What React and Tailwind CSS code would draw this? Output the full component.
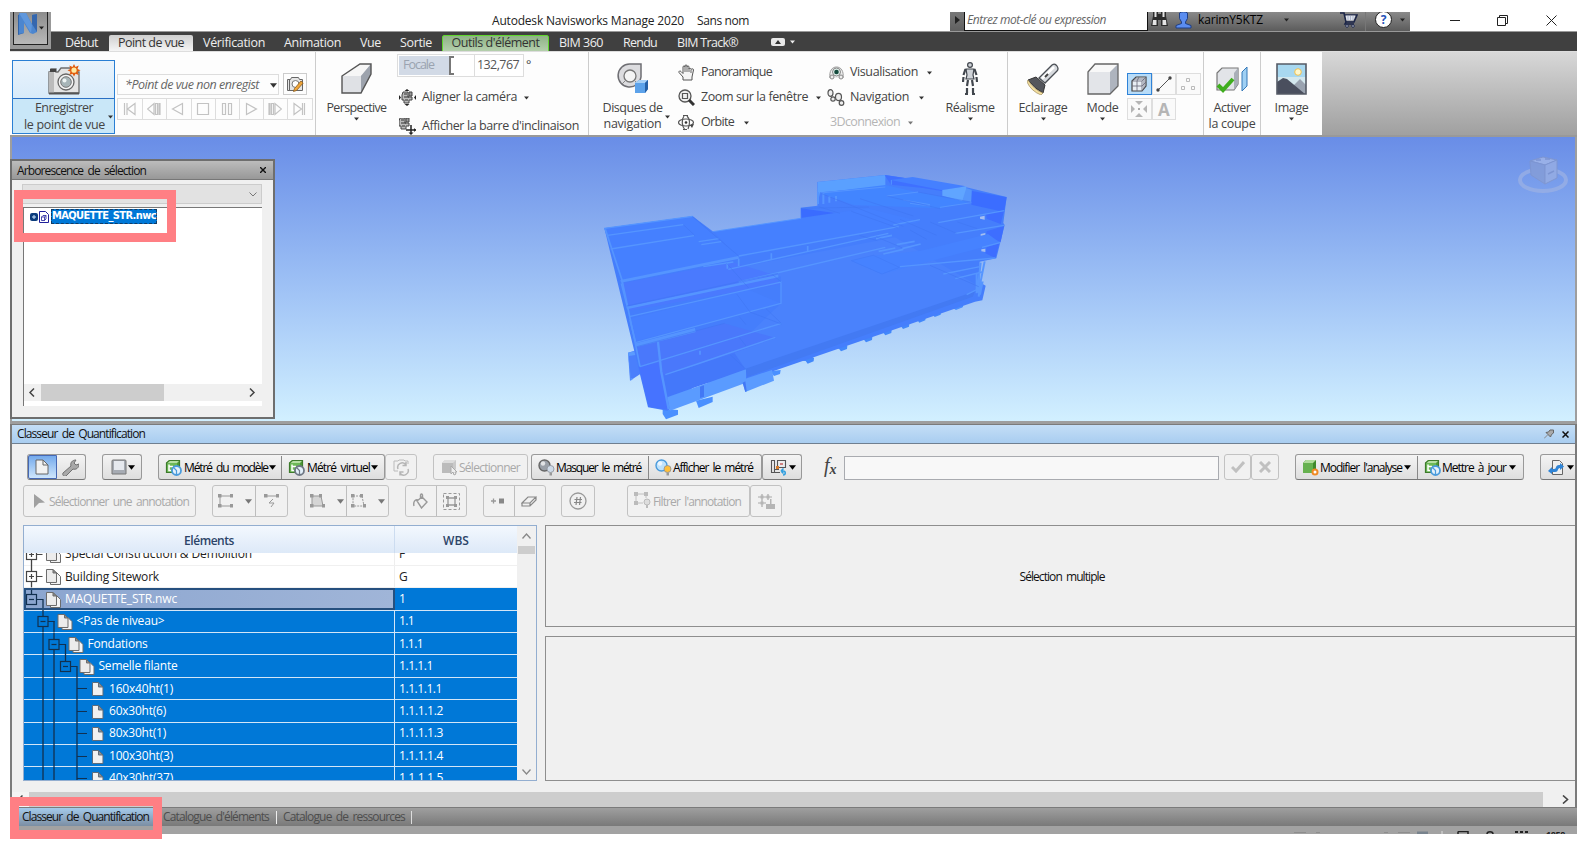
import React, { useLayoutEffect, useRef, useState } from "react";

/* Single-line label whose tracking is adjusted so that it spans `w` pixels. */
function T({ w, className = "", children }) {
  const ref = useRef(null);
  const [ls, setLs] = useState(0);
  useLayoutEffect(() => {
    const el = ref.current;
    const natural = el.getBoundingClientRect().width;
    setLs((w - natural) / el.textContent.length);
  }, [w]);
  return (
    <span ref={ref} className={`inline-block shrink-0 whitespace-pre ${className}`} style={{ letterSpacing: ls + "px" }}>
      {children}
    </span>
  );
}

function Caret({ className = "", size = 5, color = "#333" }) {
  return (
    <svg className={`shrink-0 ${className}`} width={size} height={Math.ceil(size / 2) + 1} viewBox="0 0 8 5">
      <path d="M0 0h8L4 5z" fill={color} />
    </svg>
  );
}

function Svg({ w, h, vb, className = "", children }) {
  return (
    <svg className={`shrink-0 ${className}`} width={w} height={h} viewBox={vb || `0 0 ${w} ${h}`} fill="none">
      {children}
    </svg>
  );
}

/* ---------- Title bar ---------- */

function AppButton() {
  return (
    <div className="h-[37px] w-[41px] shrink-0 bg-[#999] px-[3px] pb-[4px]">
      <div className="flex h-full w-full items-start border border-t-0 border-[#222] bg-linear-to-b from-[#8c8c8c] to-[#b9b9b9] pl-[4px]">
        <Svg w={20} h={24}>
          <path d="M0 3 6 1v20l-6 2z" fill="#2f62a8" />
          <path d="M1 1h7l6 11V3l5-1v18l-4 2-3-1-6-10v10l-5 1z" fill="#4c86cf" />
          <path d="M14 3l5-1v18l-5-8z" fill="#3567ae" />
          <path d="M1 1h7l6 12-1 8-6-10z" fill="#5f97dc" />
        </Svg>
        <Caret className="mt-[14px] ml-[1px]" size={5} color="#222" />
      </div>
    </div>
  );
}

function TitleRow() {
  return (
    <div className="flex h-[20px] items-center overflow-hidden border-b border-[#999] bg-white text-[12px] text-[#222]">
      <div className="flex w-[899px] shrink-0 pl-[441px] pb-[2px]">
        <T w={192}>Autodesk Navisworks Manage 2020</T>
        <T w={52} className="ml-[13px]">Sans nom</T>
      </div>
      <div className="flex h-full w-[460px] shrink-0 items-center bg-linear-to-b from-[#8a8a8a] to-[#5c5c5c]">
        <div className="flex h-full w-[14px] shrink-0 items-center justify-center bg-linear-to-b from-[#777] to-[#606060]">
          <Svg w={5} h={8} className="mb-[4px]"><path d="M0 0v8l5-4z" fill="#222" /></Svg>
        </div>
        <div className="flex h-full w-[184px] shrink-0 items-center border border-t-0 border-[#111] bg-white pl-[2px] pb-[3px] italic text-[#666]">
          <T w={139}>Entrez mot-clé ou expression</T>
        </div>
        <Svg w={17} h={17} className="ml-[3px] mb-[4px]">
          <path d="M2 0h5v3h3V0h5v5l2 10h-7V9H7v6H0L2 5z" fill="#2c2c2c" />
          <path d="M3.500 1h2v5h-2zM11.500 1h2v5h-2zM2 9h3.500v5h-4zM11.500 9H15l.5 5h-4z" fill="#e4e4e4" />
        </Svg>
        <Svg w={17} h={17} className="ml-[7px] mb-[3px]">
          <path d="M4.500 1C6-.5 11-.5 12.500 1v5.500L10.500 10v1.500l5.500 2V16H1v-2.500l5.500-2V10l-2-3.500z" fill="#5b8df0" stroke="#1f3f86" />
        </Svg>
        <T w={65} className="ml-[6px] mb-[3px] text-black">karimY5KTZ</T>
        <Caret className="ml-[21px] mb-[3px]" color="#222" />
        <Svg w={18} h={16} className="ml-[51px] mb-[4px]">
          <path d="M0 1h4l2 9h8l3-7H5M6 10l-1 2h9" stroke="#1b2548" strokeWidth="1.600" />
          <path d="M5.500 3.500h10l-2 5h-7z" fill="#dfe3ee" /><path d="M8 4v4M10.500 4v4M13 4v4" stroke="#9aa3bd" strokeWidth=".7" /><circle cx="7" cy="14" r="1.300" fill="#dfe3ee" stroke="#1b2548" /><circle cx="13" cy="14" r="1.300" fill="#dfe3ee" stroke="#1b2548" />
        </Svg>
        <div className="ml-[7px] h-full w-px bg-[#777]" />
        <div className="ml-[9px] mb-[4px] flex h-[17px] w-[17px] shrink-0 items-center justify-center rounded-full border border-[#222] bg-white text-[12px] leading-[12px] font-bold text-[#2451b8]">?</div>
        <Caret className="ml-[8px] mb-[3px]" color="#222" />
      </div>
      <Svg w={10} h={12} className="ml-[40px] mb-[4px]"><path d="M0 6.500h10" stroke="#222" /></Svg>
      <Svg w={11} h={12} className="ml-[37px] mb-[3px]"><path d="M.5 3.500h8v8h-8zM2.500 3.500v-2h8v8h-2" stroke="#222" /></Svg>
      <Svg w={11} h={11} className="ml-[38px] mb-[3px]"><path d="M.5.5l10 10M10.500.5l-10 10" stroke="#222" /></Svg>
    </div>
  );
}

function TabRow() {
  return (
    <div className="flex h-[19px] items-center bg-[#404040] pt-[3px] text-[12.500px] leading-[16px] text-[#eee]">
      <T w={33} className="ml-[14px]">Début</T>
      <div className="ml-[11px] flex h-[17px] w-[84px] shrink-0 items-center justify-center rounded-t-[2px] bg-linear-to-b from-[#cfcfcf] to-[#f7f7f7] text-[#333]">
        <T w={66}>Point de vue</T>
      </div>
      <T w={62} className="ml-[10px]">Vérification</T>
      <T w={57} className="ml-[19px]">Animation</T>
      <T w={21} className="ml-[19px]">Vue</T>
      <T w={32} className="ml-[19px]">Sortie</T>
      <div className="ml-[10px] flex h-[17px] w-[107px] shrink-0 items-center justify-center rounded-t-[2px] border border-[#5fd62d] bg-linear-to-b from-[#8fb386] to-[#b4cfac] text-[#333]">
        <T w={88}>Outils d'élément</T>
      </div>
      <T w={44} className="ml-[10px]">BIM 360</T>
      <T w={34} className="ml-[20px]">Rendu</T>
      <T w={61} className="ml-[20px]">BIM Track®</T>
      <Svg w={14} h={8} className="ml-[33px] mb-[2px]"><rect width="14" height="8" rx="2" fill="#e8e8e8" /><path d="M4 6l3-4 3 4z" fill="#333" /></Svg>
      <Caret className="ml-[5px] mb-[2px]" color="#eee" />
    </div>
  );
}

/* ---------- Ribbon ---------- */

const CameraIcon = () => (
  <Svg w={34} h={32}>
    <path d="M1 8h2V5h5v3h2l3-4h9l3 4h6v21H1z" fill="#e4e4e4" stroke="#6d6d6d" strokeWidth="1.300" />
    <path d="M1 8h5v21H1z" fill="#bbb" /><path d="M2 5h6v3H2z" fill="#444" />
    <path d="M1 29.500h30" stroke="#555" strokeWidth="2" />
    <circle cx="18" cy="18" r="8" fill="#f5f5f5" stroke="#666" strokeWidth="1.300" />
    <circle cx="18" cy="18" r="5.300" fill="#a7b5b8" stroke="#777" /><circle cx="16.500" cy="16.500" r="2" fill="#eef4f4" />
    <path d="M26 0l1.500 3 3.200-1.500L29.500 5l3 1.200-3 1.500 1.200 3.300-3.200-1.200L26 12.500l-1.500-2.700-3.200 1.200 1.200-3.300-3-1.500 3-1.200-1.200-3.500L24.500 3z" fill="#e25b0c" />
    <circle cx="26" cy="6.200" r="2.600" fill="#ffe9a0" />
  </Svg>
);

const PLAY = [
  "M1.500 1v12M12 1.500v11L4.500 7zM4 1v12",
  "M7 1.500v11L.5 7zM8.500 1.500h2v11h-2zM12 1.500h1v11h-1z",
  "M11.500 1.500v11L1.500 7z",
  "M1.500 1.500h11v11h-11z",
  "M2.500 1.500h3v11h-3zM8.500 1.500h3v11h-3z",
  "M2.500 1.500v11L12.500 7z",
  "M7 1.500v11L13.500 7zM1 1.500h1v11H1zM3.500 1.500h2v11h-2z",
  "M2 1.500v11L9.500 7zM12.500 1v12M10.500 1v12",
];

function BigButton({ icon, label, w, box, label2, w2, caret = true, side }) {
  return (
    <div className={`flex shrink-0 flex-col items-center pt-[10px] ${box}`}>
      <div className="flex h-[33px] items-center justify-center">{icon}</div>
      <T w={w} className="mt-[4px] leading-[17px]">{label}</T>
      {label2 ? (
        <div className="flex items-center leading-[16px]">
          <T w={w2}>{label2}</T>
          {side && <Caret className="-mt-[15px] ml-[3px] -mr-[8px]" />}
        </div>
      ) : (
        caret && <Caret className="mt-[1px]" />
      )}
    </div>
  );
}

function Item({ icon, label, w, caret = true, cls = "", gap = "ml-[9px]" }) {
  return (
    <div className={`flex h-[25px] shrink-0 items-center ${cls}`}>
      <div className="flex w-[23px] shrink-0 items-center">{icon}</div>
      <T w={w}>{label}</T>
      {caret && <Caret className={gap} />}
    </div>
  );
}

function SmallBtn({ children, active, w = "w-[24.500px]" }) {
  return (
    <div className={`flex h-[22px] items-center justify-center border ${w} ${active ? "border-[#2f83d8] bg-[#b8dcf8]" : "border-[#dedede] bg-[#fafafa]"}`}>
      {children}
    </div>
  );
}

const Camera2 = () => (
  <g>
    <path d="M4 3h5v5h4v3h-3v3H5v-3H3V6z" fill="#bbb" stroke="#444" /><path d="M5 5h3M5 8h5M6 11h3" stroke="#333" />
    <path d="M10 3h3v4h-3z" fill="#999" stroke="#444" />
  </g>
);

function Ribbon() {
  return (
    <div className="flex h-[86px] shrink-0 border-t border-[#ddd] border-b-2 border-b-[#999] bg-linear-to-b from-[#d8d8d8] to-[#a0a0a0] text-[12.500px] text-[#444]">
      <div className="flex w-[306px] shrink-0 border-r border-[#ccc] bg-[#fdfdfd] pl-[2px]">
        <div className="mt-[8px] flex h-[74px] w-[103px] shrink-0 flex-col border border-[#2a7fd4] bg-[#c9e7f8]">
          <div className="flex h-[38px] items-center justify-center border-b border-[#2a6fc4] bg-linear-to-b from-[#e9f3fc] to-[#d8ebfa] pl-[2px]"><CameraIcon /></div>
          <div className="flex flex-1 flex-col items-center pt-[1px] leading-[16.500px]">
            <T w={58} className="ml-[1px]">Enregistrer</T>
            <div className="flex items-center"><T w={81} className="ml-[2px]">le point de vue</T><Caret className="-mt-[15px] ml-[3px] -mr-[8px]" /></div>
          </div>
        </div>
        <div className="ml-[2px] mt-[21px] flex flex-col">
          <div className="flex">
            <div className="mt-[1px] flex h-[21px] w-[162px] items-center justify-between border border-[#ddd] pt-[1px] pl-[7px] pr-[1px] italic text-[#666]">
              <T w={134}>*Point de vue non enregist</T><Caret size={7} />
            </div>
            <div className="ml-[4px] flex h-[22px] w-[24px] items-center justify-center border border-[#ccc]">
              <Svg w={18} h={17}>
                <path d="M1.500 3.500h3l1-2h7l1 2h3v11h-15z" fill="#e5e5e5" stroke="#666" /><path d="M3.500 4v10" stroke="#666" /><circle cx="9.500" cy="8" r="3.500" fill="#fff" stroke="#777" />
                <path d="M7.500 15.500l1-3L15 5l2.200 2-6.700 7.500z" fill="#f0a63a" stroke="#8a5a1c" strokeWidth=".8" />
              </Svg>
            </div>
          </div>
          <div className="mt-[3px] flex border border-[#ddd]">
            {PLAY.map((d, i) => (
              <div key={i} className={`flex h-[20px] w-[24.200px] items-center justify-center pr-[1px] ${i ? "border-l border-[#ddd]" : ""}`}>
                <Svg w={14} h={14}><path d={d} stroke="#c3c3c3" strokeWidth="1.200" /></Svg>
              </div>
            ))}
          </div>
        </div>
      </div>

      <div className="flex w-[273px] shrink-0 border-r border-[#ccc] bg-[#fdfdfd]">
        <BigButton box="w-[81px]" w={60} label="Perspective" icon={
          <Svg w={31} h={32}>
            <path d="M1 13l18-12h11v8L20 30H1z" fill="#c9ccd2" /><path d="M1 13L19 1h11L20 13z" fill="#f6f6f6" /><path d="M20 13L30 1v10L20 30z" fill="#9da3ad" />
            <path d="M1 13h19v17H1z" fill="#dfe1e5" /><path d="M1 13L19 1h11v10L20 30H1z" stroke="#555" strokeWidth="1.400" />
          </Svg>} />
        <div className="flex h-[83px] flex-col pt-[2px]">
          <div className="flex h-[23px] shrink-0 items-center">
            <div className="flex h-[23px] w-[127px] items-center border border-[#ddd] bg-white">
              <div className="ml-[1px] flex h-[19px] w-[50px] shrink-0 items-center bg-[#d2dae6] pl-[4px] text-[#9aa3b0]"><T w={31}>Focale</T></div>
              <div className="h-[19px] w-[5px] shrink-0 border-2 border-r-0 border-[#777]" />
              <div className="ml-[20px] flex h-full items-center border-l border-[#ddd] pl-[2px] text-[#555]"><T w={42}>132,767</T></div>
            </div>
            <span className="ml-[2px]">°</span>
          </div>
          <Item cls="ml-[2px] mt-[8px]" w={95} gap="ml-[7px]" label="Aligner la caméra" icon={<Svg w={17} h={17}><Camera2 /><path d="M8 0l2.500 2h-5zM8 17l2.500-2h-5zM0 6v5l2-2.500zM17 6v5l-2-2.500z" fill="#222" /></Svg>} />
          <Item cls="ml-[2px] mt-[4px]" w={157} caret={false} label="Afficher la barre d'inclinaison" icon={<Svg w={17} h={17}><g transform="translate(-3 -3)"><Camera2 /></g><path d="M12 7v9M7 12h10" stroke="#222" strokeWidth="1.500" /><path d="M12 17l2.500-2.500h-5zM17 12l-2-2v4z" fill="#222" /></Svg>} />
        </div>
      </div>

      <div className="flex w-[419px] shrink-0 border-r border-[#ccc] bg-[#fdfdfd]">
        <BigButton box="w-[87px]" w={60} label="Disques de" w2={58} label2="navigation" side icon={
          <Svg w={32} h={32}>
            <path d="M13 1h11v13a11.500 11.500 0 1 1-11-13z" fill="#dcdcdf" stroke="#6e6e73" strokeWidth="1.500" />
            <circle cx="13" cy="13" r="6" fill="#f4f4f4" stroke="#777" strokeWidth="1.300" /><path d="M5 21l4-4M17 17l3 3" stroke="#888" />
            <path d="M18 20l4-3h9v9l-3 4H18z" fill="#3c83d3" /><path d="M18 20l4-3h9l-3 3z" fill="#a6d0f7" /><path d="M18 20h10v10H18z" fill="#5ca2ea" /><path d="M28 20l3-3v9l-3 4z" fill="#2561a8" />
          </Svg>} />
        <div className="flex w-[151px] shrink-0 flex-col pt-[8px] pl-[2px]">
          <Item w={71} caret={false} label="Panoramique" icon={<Svg w={17} h={17}><path d="M5 16v-3L1 8.500c-.5-1.500 1-2 2-1l2 2V3c0-1.500 2-1.500 2 0V2c0-1.500 2-1.500 2 0v1c0-1.500 2-1.500 2 0v2c.5-1 2-1 2 .5 1-1 2.500-1 2.500.5L14 13v3z" fill="#f4f4f4" stroke="#555" /><path d="M7 3v5M9 3v5M11 4v4M13 6v3" stroke="#666" /></Svg>} />
          <Item w={107} gap="ml-[8px]" label="Zoom sur la fenêtre" icon={<Svg w={17} h={17}><circle cx="7" cy="7" r="6" fill="#eee" stroke="#555" strokeWidth="1.300" /><path d="M4.500 4.500h5v5h-5z" stroke="#555" strokeWidth="1.200" /><path d="M11 11l5 5" stroke="#333" strokeWidth="3" /></Svg>} />
          <Item w={33} gap="ml-[10px]" label="Orbite" icon={<Svg w={17} h={17}><ellipse cx="8" cy="8.500" rx="7.500" ry="3.500" stroke="#555" strokeWidth="1.200" /><path d="M5 1.500h5M5 15.500h4M6 2c-3 4-2 10 1 14M9 2c3 3 3 8 1 13" stroke="#555" strokeWidth="1.200" /><circle cx="8" cy="8.500" r="1.300" fill="#333" /><path d="M12 11l4-1-2 4z" fill="#444" /></Svg>} />
        </div>
        <div className="flex w-[107px] shrink-0 flex-col pt-[8px]">
          <Item w={68} gap="ml-[9px]" label="Visualisation" icon={<Svg w={17} h={14} className="ml-[1px]"><path d="M2 12C1 5 4 1 8.500 1S16 5 15 12" fill="#eee" stroke="#999" /><circle cx="8.500" cy="6" r="4" fill="#dfeee9" stroke="#888" /><circle cx="8.500" cy="6" r="2.300" fill="#134a3c" /><circle cx="4" cy="11" r="2" fill="#eee" stroke="#888" /><circle cx="13" cy="11" r="2" fill="#eee" stroke="#888" /></Svg>} />
          <Item w={59} gap="ml-[10px]" label="Navigation" icon={<Svg w={18} h={17}><g stroke="#555" strokeWidth="1.200" fill="#eee"><ellipse cx="3.500" cy="4" rx="2.500" ry="3.400" /><circle cx="6" cy="10" r="2.200" /><ellipse cx="11.500" cy="8" rx="3" ry="3.600" /><circle cx="14.500" cy="14" r="2.300" /></g></Svg>} />
          <div className="ml-[3px] flex h-[25px] items-center text-[#b5b5b5]"><T w={70}>3Dconnexion</T><Caret className="ml-[8px]" color="#777" /></div>
        </div>
        <BigButton box="w-[72px]" w={49} label="Réalisme" icon={
          <Svg w={16} h={33}>
            <g fill="#cfd3d8" stroke="#41464d" strokeWidth="1.200"><circle cx="8" cy="3" r="2.400" /><path d="M4 7h8l-1 6 1 4H4l1-4z" /><path d="M3.500 7L1.500 13M12.500 7l2 6M1.500 15l-.5 5M14.500 15l.5 5M6 18l-1 6M10 18l1 6M5 26v5M11 26v5M3 32h3M10 32h3" strokeWidth="2.200" /></g>
          </Svg>} />
      </div>

      <div className="flex w-[196px] shrink-0 border-r border-[#ccc] bg-[#fdfdfd]">
        <BigButton box="w-[70px]" w={49} label="Eclairage" icon={
          <Svg w={32} h={32}>
            <path d="M12 15L25 2q3-2 5 1t0 5L18 20z" fill="#d7dade" stroke="#4b4f55" strokeWidth="1.300" /><path d="M15 15.500L27 4" stroke="#fff" strokeWidth="2.500" /><path d="M18 14l3-3" stroke="#444" strokeWidth="2" />
            <path d="M9 14l9 8-2 8Q8 26 1 17z" fill="#54565c" stroke="#333" /><path d="M1 17q6 10 15 13l-2 2Q4 28 0 19z" fill="#f3dfa0" stroke="#8f7b4a" strokeWidth=".6" />
          </Svg>} />
        <BigButton box="w-[49px]" w={32} label="Mode" icon={
          <Svg w={32} h={32}>
            <path d="M1 9l7-8h23v22l-8 8H1z" fill="#aeb4be" /><path d="M1 9l7-8h23l-8 8z" fill="#f8f8f8" /><path d="M1 9h22v22H1z" fill="#e3e5e9" /><path d="M1 9l7-8h23v22l-8 8H1z" stroke="#666" strokeWidth="1.300" />
          </Svg>} />
        <div className="mt-[21px] flex flex-col gap-[3px]">
          <div className="flex">
            <SmallBtn active><Svg w={16} h={16}><path d="M1 5l4-4h10v9l-4 5H1z" fill="#e8eef4" stroke="#444" strokeWidth="1.200" /><path d="M1 5h10v10M11 5l4-4M6 5v10M1 10h10M13 3v10M3 3h10M8 1L6 5M11 10l4-4" stroke="#667" strokeWidth=".8" /></Svg></SmallBtn>
            <SmallBtn><Svg w={16} h={16}><path d="M2 14L14 2" stroke="#555" /><circle cx="2" cy="14" r="1.700" fill="#444" /><circle cx="14" cy="2" r="1.700" fill="#444" /></Svg></SmallBtn>
            <SmallBtn><Svg w={16} h={16}><path d="M6.500 2.500h3v3h-3zM1.500 10.500h3v3h-3zM11.500 10.500h3v3h-3z" stroke="#bbb" /></Svg></SmallBtn>
          </div>
          <div className="flex">
            <SmallBtn><Svg w={16} h={16}><path d="M4 0h8L8 4zM4 16h8l-4-4zM0 4v8l4-4zM16 4v8l-4-4z" fill="#b5b5b5" /><path d="M7 7h2v2H7z" fill="#aaa" /></Svg></SmallBtn>
            <SmallBtn><span className="text-[17px] leading-none font-bold text-[#b5b5b5]">A</span></SmallBtn>
          </div>
        </div>
      </div>

      <div className="flex w-[57px] shrink-0 border-r border-[#ccc] bg-[#fdfdfd]">
        <BigButton box="w-[56px]" w={37} label="Activer" w2={47} label2="la coupe" icon={
          <Svg w={32} h={28} className="mt-[2px]">
            <path d="M1 7l5-5h16v16l-4 6H1z" fill="#e2e4e8" stroke="#777" strokeWidth="1.200" /><path d="M18 7l4-5v16l-4 6z" fill="#a9afb8" />
            <path d="M26 6l5-5v19l-5 5z" fill="#9fd0f4" stroke="#3579b8" /><path d="M2 19l5 5L17 13" stroke="#3fae1e" strokeWidth="4" />
          </Svg>} />
      </div>
      <div className="flex w-[61px] shrink-0 bg-[#fdfdfd]">
        <BigButton box="w-[61px]" w={34} label="Image" icon={
          <Svg w={31} h={32}>
            <path d="M1 1h29v30H1z" fill="#a8d8f0" /><path d="M1 14h29v17H1z" fill="#d4e8ee" /><path d="M18 22l6-6 6 6v9H18z" fill="#9aa3b0" /><path d="M1 19l6-4 4 1 18 15H1z" fill="#4a4f5e" /><circle cx="22" cy="9" r="3.300" fill="#fff7cc" stroke="#f2c14e" />
            <path d="M1 1h29v30H1z" stroke="#555b66" strokeWidth="1.600" />
          </Svg>} />
      </div>
    </div>
  );
}

/* ---------- 3D view ---------- */

const FEET = [[640, 600], [740, 563], [815, 536], [873, 515], [926, 496], [975, 477], [1021, 460], [1088, 436]];

function Building() {
  return (
    <svg className="absolute left-[578px] top-[23px]" width="430" height="270" viewBox="0 0 1290 810">
      {FEET.map(([x, y]) => (
        <path key={x} d={`M${x - 4} ${y + 2}l22-16 14 8-1 10-18 7-6-8z`} fill="#4288fb" />
      ))}
      <path d="M1078 438l40-10v14l-20 8zM218 746l46 4v14l-36 14-10-16zM318 722l50-12v16l-42 18zM540 634l32-4-2 12-18 6z" fill="#4a90ff" />
      <path d="M114 578l26-8 20 66-40 26z" fill="#4a7ffc" />
      <path d="M114 578l26-6 2 12-26 4 6 66 8 2-8 6z" fill="#5b9bff" />
      <path d="M43 205l265-36 62 46 262-38V143l50-6V66l204-21 240 36 124 30-10 78 4 6-25 100-50 10 0 62 18 10-10 44-22 4-700 241-85 31-12-20-10-30L232 752l-58-10z" fill="#457efc" />
      <path d="M43 205l265-36 138 120L96 360z" fill="#4580ff" />
      <path d="M372 215l460-70 160 40-550 108z" fill="#4580ff" />
      <path d="M445 322l470-90 250 146-12 24-690 228-36-60 146-140V350z" fill="#4a82fc" />
      <path d="M466 626l690-232-8 16-676 241z" fill="#437af3" />
      <path d="M683 66l203-21v36l-196 16-8 40z" fill="#5aa0ff" />
      <path d="M690 99l196-24 90 20 164 30-90 20-260-10z" fill="#4285ff" />
      <path d="M884 45l245 37-70 12-60-10-96-10z" fill="#3f70ff" />
      <path d="M902 60l66-9 160 28-70 12z" fill="#4580ff" />
      <path d="M1057 90l72-11v24l-12 20-60-16z" fill="#60a5ff" />
      <path d="M1146 93l104 19-8 44-98-22z" fill="#3b6dff" />
      <path d="M1129 84l16 6-2 36-26-4z" fill="#5595fb" />
      <path d="M633 145l100 14-98 14z" fill="#3a6cff" />
      <path d="M1188 160l54-8-10 40-42-16zM1190 214l52-16-10 48-44-18zM1190 262l38-12-12 44-30-14z" fill="#3e6eff" />
      <path d="M1170 170l14-3v12l-14-3zM1172 222l14-3v14l-14-4zM1174 268l12-2v10l-12-2z" fill="#a5bff0" />
      <path d="M784 302l68-15 142-15 200-50 36 26-354 94z" fill="#4682ff" />
      <path d="M784 302l92 40 52-20-78-36z" fill="#4682ff" stroke="#4179f5" strokeWidth="1.500" />
      <path d="M140 556l262-66 155 44-236 84-86 26 6 96-64-1z" fill="#4a78fb" />
      <path d="M222 646l212-66 34 50-236 80z" fill="#4478fa" />
      <path d="M146 620l58-12 34 142-62-10z" fill="#4673ff" />
      <path d="M232 712l236-84v40L240 752z" fill="#5a9bff" />
      <path d="M330 680l12-4v34l-12 4z" fill="#4278f5" />
      <path d="M458 668l8-12 80-26 6 32-86 34z" fill="#5a9bff" />
      <path d="M458 668l8-4 4 30-4 2z" fill="#4278f5" />
      <path d="M96 370l330-64 118 36 30 30-456 80z" fill="#4a7afe" />
      <path d="M118 478l354-90 100 42-436 114z" fill="#4680ff" />
      <g stroke="#5595ff" fill="none">
        <path d="M43 205l265-36" strokeWidth="4" />
        <path d="M46 208l50 152 40 190 14 70" strokeWidth="5" />
        <path d="M446 292l-354 72" strokeWidth="8" />
        <path d="M446 288l480-88" strokeWidth="4" />
        <path d="M52 226l228-32M62 267l250-40M326 245l60-9M334 254l60-9" strokeWidth="4" />
        <path d="M368 215l265-40M690 99l196-18M904 74V60" strokeWidth="3" />
        <path d="M415 328l480-108M340 320l90-14M446 366l440-104" strokeWidth="4" />
        <path d="M110 444l455-96" strokeWidth="7" />
        <path d="M118 470l455-104v64L136 548" strokeWidth="4" />
        <path d="M136 556l180-46" strokeWidth="12" />
        <path d="M150 620l424-130M226 644l96-32 234-80" strokeWidth="4" />
        <path d="M204 546l10 90 22 112" strokeWidth="7" />
        <path d="M94 370l20 78M120 480l16 64M446 296v22M544 280v20M653 258v18M412 310v16M330 572v12" strokeWidth="5" />
        <path d="M910 195l80-16M1045 188l198-36M1096 220l146-24M1176 262l54-14M930 320l286-26M1060 342l110-22M1096 356l80-20M1130 404l40-20" strokeWidth="4" />
        <path d="M866 274l50-10M880 282l60-14M920 254l54-10M936 266l56-14M858 236l48-10" strokeWidth="5" />
        <path d="M940 120l80 14M960 130l60 8M890 108l95-12M1050 142l94-14" strokeWidth="3" />
        <path d="M1184 304l-12 60-6 46M1172 308l-10 90M1160 340v60M1178 364l-8 40" strokeWidth="6" />
        <path d="M684 96v36M700 100v32M718 108v20M738 108v16" strokeWidth="6" />
      </g>
      <g stroke="#3f75f2" fill="none" strokeWidth="1.600">
        <path d="M308 170l138 118M280 194l34 32M410 310l66 74M440 402l40 54 94 36M448 470l20 24M448 532l20 26M528 446l46 44M548 344l26 22M420 584l48 44" />
        <path d="M690 99l250 100M686 140l64 20M784 154l140 50M810 116l160 52M890 108l160 38M984 96l158 30M1020 186l80 34M930 178l110 48M808 226l54 16M858 230l80 34M960 210l50 28M1102 186l60 20M1020 316l146 64" />
        <path d="M633 145l204-4M110 438l454-98M140 560l264-70" />
      </g>
    </svg>
  );
}

function ViewCube() {
  return (
    <svg className="absolute right-[6px] top-[17px] opacity-70" width="52" height="42" viewBox="0 0 52 42" fill="none">
      <ellipse cx="26" cy="26" rx="23" ry="11" stroke="#9db2e4" strokeWidth="4" />
      <path d="M13 7l13-4 14 3v18l-12 6-14-9z" fill="#94a9da" />
      <path d="M13 7l13-4 14 3-12 5z" fill="#a9bbe8" stroke="#8295c8" />
      <path d="M13 7l15 4v19l-14-9z" fill="#889ed4" stroke="#8295c8" />
      <path d="M28 11l12-5v18l-12 6z" fill="#9db1e2" stroke="#8295c8" />
      <path d="M31 20l6-3M19 6h5M28 5h5" stroke="#8094c9" strokeWidth="1.500" />
    </svg>
  );
}

function SelectionTree() {
  return (
    <div className="absolute -left-[2px] top-[22px] flex h-[260px] w-[265px] flex-col border-2 border-[#6e6e6e] bg-[#f0f0f0] text-[12px] [word-spacing:2px] text-[#111]">
      <div className="flex h-[19px] shrink-0 items-center justify-between border-b border-[#777] bg-linear-to-b from-[#bcbcbc] to-[#989898] pt-[1px] pl-[5px] pr-[7px]">
        <T w={129}>Arborescence de sélection</T>
        <Svg w={6} h={6} className="mb-[1px]"><path d="M0 0l6 6M6 0L0 6" stroke="#111" strokeWidth="1.400" /></Svg>
      </div>
      <div className="mt-[4px] ml-[10px] flex h-[20px] w-[240px] shrink-0 items-center justify-end border border-[#ccc] bg-[#e2e2e2] pr-[4px]">
        <Svg w={8} h={5}><path d="M.5.5L4 4 7.500.5" stroke="#777" /></Svg>
      </div>
      <div className="mt-[3px] ml-[11px] flex h-[199px] w-[239px] shrink-0 flex-col border-l border-t border-[#777] bg-white">
        <div className="flex h-[17px] items-center pl-[6px]">
          <Svg w={8} h={8}><rect width="8" height="8" rx="2" fill="#0b3c7c" /><path d="M4 2v4M2 4h4" stroke="#cfe8ff" /></Svg>
          <Svg w={10} h={12} className="ml-[1px]"><path d="M.5.500h6l3 3v8h-9z" fill="#fff" stroke="#20209a" /><path d="M2.500 6l1.500-1.500h3V8L5.500 9.500h-3zM2.500 6h3v3.500M5.500 6L7 4.500" stroke="#20209a" strokeWidth=".8" /></Svg>
          <div className="ml-[2px] flex h-[15px] items-center border border-dashed border-[#123c66] bg-[#0078d7] font-['DejaVu_Sans_Condensed','DejaVu_Sans',sans-serif] text-[11px] font-bold text-white">
            <T w={104}>MAQUETTE_STR.nwc</T>
          </div>
        </div>
        <div className="flex-1" />
        <div className="flex h-[17px] items-center bg-[#f0f0f0]">
          <Svg w={17} h={9}><path d="M10 .5L6 4.500l4 4" stroke="#444" strokeWidth="1.500" /></Svg>
          <div className="h-full w-[123px] bg-[#cdcdcd]" />
          <Svg w={9} h={9} className="ml-[83px]"><path d="M3 .5l4 4-4 4" stroke="#444" strokeWidth="1.500" /></Svg>
        </div>
        <div className="h-[5px] bg-white" />
      </div>
      <div className="absolute left-[2px] top-[29px] h-[52px] w-[162px] border-[9px] border-[#ff7f84]" />
    </div>
  );
}

/* ---------- Quantification panel ---------- */

const G = "shrink-0 flex items-center rounded-[3px] border";
const ON = "border-[#999] border-b-[#777] bg-linear-to-b from-[#f4f4f4] to-[#dedede] text-black";
const OFF = "border-[#c2c2c2] bg-[#f1f1f1] text-[#a9a9a9]";

const Cube = ({ badge = "#4a9bdc", gray }) => (
  <Svg w={17} h={17}>
    <path d="M1 4l3-3h11v9l-3 4H1z" fill={gray ? "#c9c9c9" : "#4d9a38"} /><path d="M1 4l3-3h11l-3 3z" fill={gray ? "#ddd" : "#b5dfa2"} /><path d="M1 4h11v10H1z" fill={gray ? "#bbb" : "#6cb956"} />
    {!gray && <path d="M1.500 4l3-2.500h10v8l-3 4h-10z" stroke="#3d7a2b" strokeWidth="1.200" />}
    {!gray && <path d="M4 5.500v6h2M4 7.500h4" stroke="#fff" strokeWidth="1.500" />}
    {!gray && <circle cx="11.500" cy="11.500" r="4.500" fill="#e4f1fb" stroke={badge} strokeWidth="1.800" />}
    {!gray && <path d="M8 8l3.500 3.500V15" stroke={badge} strokeWidth="1.200" />}
    {gray && <path d="M10 7v8l2-2 1 3 2-1-1-2h2z" fill="#eee" stroke="#aaa" />}
  </Svg>
);
const Bulb = ({ ball, edge, bulb }) => (
  <Svg w={17} h={17}>
    <circle cx="6.500" cy="6.500" r="5.500" fill={ball} stroke={edge} strokeWidth="1.400" /><circle cx="5" cy="4.500" r="2.200" fill="#fff" opacity=".7" />
    <circle cx="12.500" cy="10" r="3.500" fill={bulb} stroke="#8a8f98" strokeWidth=".8" /><path d="M11.500 13.500h2.500v3h-2.500z" fill="#999" />
  </Svg>
);

function Toolbar1() {
  return (
    <div className="flex h-[26px] shrink-0 overflow-hidden text-[12px] [word-spacing:2px]">
      <div className={`${G} ${ON} ml-[15px] h-[26px] w-[59px]`}>
        <div className="flex h-full w-[29px] items-center justify-center rounded-l-[2px] border border-[#4668b4] bg-linear-to-b from-[#74aaec] to-[#cfe6fb] pr-[2px]">
          <Svg w={14} h={16}><path d="M1 1h7l5 5v9H1z" fill="#f2f2f2" stroke="#666" /><path d="M8 1v5h5" stroke="#666" /></Svg>
        </div>
        <Svg w={17} h={17} className="ml-[5px]"><path d="M1 14L9 7c-1-3 1-6 5-6l-2 3 2 2 3-1c0 4-3 6-6 5l-7 7c-2 1-4-1-3-3z" fill="#a8a8a8" stroke="#707070" /></Svg>
      </div>
      <div className={`${G} ${ON} ml-[16px] h-[26px] w-[40px] pl-[8px]`}>
        <Svg w={16} h={17}><path d="M1 2q0-1 1-1h12q1 0 1 1v13H1z" fill="#a6abb3" stroke="#777" /><path d="M3 2h10v9H3z" fill="#e6e9ee" /></Svg>
        <Caret className="ml-[1px]" size={7} color="#000" />
      </div>
      <div className={`${G} ${ON} ml-[16px] h-[26px] w-[227px] pt-[1px]`}>
        <div className="flex h-full w-[123px] items-center border-r border-[#888] pl-[6px]"><Cube /><T w={84} className="ml-[2px]">Métré du modèle</T><Caret className="ml-[1px]" size={7} color="#000" /></div>
        <div className="flex h-full items-center pl-[6px]"><Cube badge="#6f7884" /><T w={63} className="ml-[2px]">Métré virtuel</T><Caret className="ml-[1px]" size={7} color="#000" /></div>
      </div>
      <div className={`${G} ${OFF} h-[26px] w-[32px] justify-center`}><Svg w={17} h={17}><path d="M5 12H1V2h4l1-1h5l1 1h3v3" stroke="#bbb" /><path d="M5 10a4.500 4.500 0 0 1 8-4M15 10a4.500 4.500 0 0 1-8 4M13 3v3.500h-3.500M7 16.500V13h3.500" stroke="#b5b5b5" strokeWidth="1.500" /></Svg></div>
      <div className={`${G} ${OFF} ml-[16px] h-[26px] w-[95px] pt-[1px] pl-[7px]`}><Cube gray /><T w={61} className="ml-[1px]">Sélectionner</T></div>
      <div className={`${G} ${ON} ml-[3px] h-[26px] w-[231px] pt-[1px]`}>
        <div className="flex h-full w-[117px] items-center border-r border-[#888] pl-[6px]"><Bulb ball="#9aa0a8" edge="#666" bulb="#cfdbe8" /><T w={85} className="ml-[1px]">Masquer le métré</T></div>
        <div className="flex h-full items-center pl-[6px]"><Bulb ball="#bfe2fb" edge="#4a9bdc" bulb="#ffbf3a" /><T w={80} className="ml-[1px]">Afficher le métré</T></div>
      </div>
      <div className={`${G} ${ON} h-[26px] w-[40px] pl-[7px]`}>
        <Svg w={17} h={17}><path d="M1.500 1.500h3v12h-3zM1 13.500h9M7.500 1.500h8v7h-8zM5 10.500h4" stroke="#555" strokeWidth="1.100" /><path d="M6 7h3v3H6z" fill="#d67a2a" /><path d="M10 4h3v2h-3z" fill="#d08080" /><path d="M11 12h2c3 0 3 4 0 4M11 12l2.500-2.500M11 12l2.500 2.500" stroke="#2f9fe0" strokeWidth="1.500" /></Svg>
        <Caret className="ml-[2px]" size={7} color="#000" />
      </div>
      <div className="ml-[22px] flex h-[26px] w-[20px] shrink-0 items-start font-['Liberation_Serif',serif] text-[20px] leading-[23px] text-[#444] italic">
        <span>f</span><span className="mt-[7px] text-[14px] leading-[18px] font-bold">x</span>
      </div>
      <div className="h-[24px] w-[375px] shrink-0 self-end border border-[#a9abb0] bg-[#f8f8f8]" />
      <div className={`${G} ${OFF} ml-[5px] h-[26px] w-[27px] justify-center`}><Svg w={14} h={12}><path d="M1 6l4 4 8-9" stroke="#c0c0c0" strokeWidth="3" /></Svg></div>
      <div className={`${G} ${OFF} h-[26px] w-[28px] justify-center`}><Svg w={12} h={12}><path d="M1 1l10 10M11 1L1 11" stroke="#c0c0c0" strokeWidth="3" /></Svg></div>
      <div className={`${G} ${ON} ml-[16px] h-[26px] w-[229px] pt-[1px]`}>
        <div className="flex h-full w-[122px] items-center border-r border-[#888] pl-[6px]">
          <Svg w={17} h={17}><path d="M1 4l3-3h10v9l-3 4H1z" fill="#3f8a2c" /><path d="M1 4h10v10H1z" fill="#66b14f" /><path d="M1 4l3-3h10l-3 3z" fill="#b1dc9c" /><circle cx="13" cy="13" r="2.500" fill="#fff" stroke="#f08a24" strokeWidth="2" /></Svg>
          <T w={82} className="ml-[1px]">Modifier l'analyse</T><Caret className="ml-[2px]" size={7} color="#000" />
        </div>
        <div className="flex h-full items-center pl-[6px]"><Cube /><T w={64} className="ml-[1px]">Mettre à jour</T><Caret className="ml-[3px]" size={7} color="#000" /></div>
      </div>
      <div className={`${G} ${ON} ml-[16px] h-[26px] w-[44px] pl-[7px]`}>
        <Svg w={17} h={17}><path d="M4.500 1.500h7l3 3v11h-10z" fill="#eee" stroke="#666" /><path d="M0 12l4-4v2h2c3 0 1-4 5-4h1V4l4 3.500-4 3.500V9c-3 0-1 4-5 4H4v2z" fill="#2f84d6" /></Svg>
        <Caret className="ml-[2px]" size={7} color="#000" />
      </div>
    </div>
  );
}

const Seg = ({ box, children, last }) => (
  <div className={`flex h-full items-center justify-center ${last ? "" : "border-r border-[#bdbdbd]"} ${box}`}>{children}</div>
);

function Toolbar2() {
  const s = "#999";
  return (
    <div className="mt-[5px] flex h-[32px] shrink-0 text-[12px] [word-spacing:2px]">
      <div className={`${G} ${OFF} ml-[11px] w-[173px] pt-[1px] pl-[10px]`}><Svg w={11} h={14} className="mb-[2px]"><path d="M0 0l11 8.500-6 .5-5 5z" fill="#a0a0a0" /></Svg><T w={140} className="ml-[4px]">Sélectionner une annotation</T></div>
      <div className={`${G} ${OFF} ml-[16px] w-[76px]`}>
        <Seg box="w-[43px] gap-[11px] pl-[2px]"><Svg w={16} h={14}><path d="M14 2H2v10h12" stroke={s} /><path d="M0 0h3.500v3.500H0zM0 10h3.500v3.500H0zM12 0h3v3.500h-3zM12 10h3v3.500h-3z" fill={s} /></Svg><Caret size={7} color="#777" /></Seg>
        <Seg last box="w-[31px]"><Svg w={16} h={14}><path d="M2 2h12M9 5l-4 4h5l-3 4" stroke={s} /><path d="M0 0h3.500v3.500H0zM12 0h3v3.500h-3z" fill={s} /></Svg></Seg>
      </div>
      <div className={`${G} ${OFF} ml-[16px] w-[85px]`}>
        <Seg box="w-[42px] gap-[11px] pl-[3px]"><Svg w={16} h={14}><path d="M2 2h9l2 10H2z" fill="#d5d5d5" stroke={s} /><path d="M0 0h3.500v3.500H0zM0 10h3.500v3.500H0zM9 0h3v3.500H9zM12 10h3v3.500h-3z" fill={s} /></Svg><Caret size={7} color="#777" /></Seg>
        <Seg last box="w-[42px] gap-[11px] pl-[2px]"><Svg w={16} h={14}><path d="M2 2h9l2 10H2z" stroke={s} strokeDasharray="2 1" /><path d="M0 0h3.500v3.500H0zM0 10h3.500v3.500H0zM9 0h3v3.500H9zM12 10h3v3.500h-3z" fill={s} /></Svg><Caret size={7} color="#777" /></Seg>
      </div>
      <div className={`${G} ${OFF} ml-[16px] w-[62px]`}>
        <Seg box="w-[31px]"><Svg w={17} h={16}><path d="M5 8l5-4 5 5-5.500 6zM8.500 6V2q1-2 2 0v4M6 7C3 6 1 9 2 13" stroke={s} strokeWidth="1.400" /></Svg></Seg>
        <Seg last box="w-[30px]"><Svg w={17} h={17}><path d="M.5.5h16v16H.5z" stroke={s} strokeDasharray="3 2" /><path d="M5 5h7v7H5z" stroke={s} strokeWidth="1.300" /><path d="M3 3h3v3H3zM11 3h3v3h-3zM3 11h3v3H3zM11 11h3v3h-3z" fill={s} /></Svg></Seg>
      </div>
      <div className={`${G} ${OFF} ml-[16px] w-[63px]`}>
        <Seg box="w-[31px] pr-[2px]"><Svg w={14} h={8}><path d="M0 4h5M2.500 1.500v5" stroke={s} strokeWidth="1.300" /><path d="M8 1.500h5v5H8z" fill="#888" /></Svg></Seg>
        <Seg last box="w-[31px] pr-[2px]"><Svg w={16} h={11}><path d="M1 7l6-6h8l-6 6zM1 7v3h8l6-6V1M9 7v3" stroke="#888" strokeWidth="1.200" /></Svg></Seg>
      </div>
      <div className={`${G} ${OFF} ml-[15px] w-[34px] justify-center`}><Svg w={18} h={18}><circle cx="9" cy="9" r="8" stroke={s} strokeWidth="1.300" /><path d="M8 5L7 13M11.500 5l-1 8M5.500 7.500h7.500M5 10.500h7.500" stroke="#888" strokeWidth="1.200" /></Svg></div>
      <div className={`${G} ${OFF} ml-[32px] w-[123px] pt-[1px] pl-[6px]`}><Svg w={17} h={17} className="mb-[3px]"><path d="M2 2h10v4M2 2v9h7" stroke="#c0c0c0" /><path d="M0 0h4v4H0zM0 9h4v4H0zM10 0h4v4h-4z" fill="#bbb" /><circle cx="13" cy="10" r="3" fill="#ddd" stroke="#bbb" /><path d="M12 13h2v3h-2z" fill="#bbb" /></Svg><T w={88} className="ml-[2px]">Filtrer l'annotation</T></div>
      <div className={`${G} ${OFF} w-[32px] justify-center`}><Svg w={17} h={17}><path d="M0 4h14M0 10h8M4 1v13M10 1v6" stroke="#aaa" strokeWidth="1.200" /><path d="M2.500 2.500h3v3h-3zM8.500 2.500h3v3h-3zM2.500 8.500h3v3h-3zM12 6h1.500v5H17v5H8v-5h4z" fill="#b5b5b5" /></Svg></div>
    </div>
  );
}

/* Row data: box centre and connector lines are x offsets inside the tree column. */
const ROWS = [
  { kind: "white", box: 7.5, plus: true, icon: 22, text: "Special Construction & Demolition", w: 187, wbs: "F", ww: 6, v: [[7.5, 0, 22]] },
  { kind: "white", box: 7.5, plus: true, icon: 22, text: "Building Sitework", w: 94, wbs: "G", ww: 8, v: [[7.5, 0, 22]] },
  { kind: "focus", box: 7.5, icon: 22, text: "MAQUETTE_STR.nwc", w: 112, wbs: "1", ww: 5, v: [[7.5, 0, 11], [19, 11, 22]] },
  { kind: "blue", box: 19, icon: 33.5, text: "<Pas de niveau>", w: 88, wbs: "1.1", ww: 15, v: [[19, 0, 22], [30, 11, 22]] },
  { kind: "blue", box: 30, icon: 44.5, text: "Fondations", w: 60, wbs: "1.1.1", ww: 24, v: [[19, 0, 22], [30, 0, 22], [41.5, 11, 22]] },
  { kind: "blue", box: 41.5, icon: 55.5, text: "Semelle filante", w: 79, wbs: "1.1.1.1", ww: 34, v: [[19, 0, 22], [30, 0, 22], [41.5, 0, 11], [53, 11, 22]] },
  { kind: "leaf", text: "160x40ht(1)", w: 64, wbs: "1.1.1.1.1", ww: 43 },
  { kind: "leaf", text: "60x30ht(6)", w: 57, wbs: "1.1.1.1.2", ww: 44 },
  { kind: "leaf", text: "80x30ht(1)", w: 57, wbs: "1.1.1.1.3", ww: 44 },
  { kind: "leaf", text: "100x30ht(3)", w: 64, wbs: "1.1.1.1.4", ww: 44 },
  { kind: "leaf", text: "40x30ht(37)", w: 64, wbs: "1.1.1.1.5", ww: 44 },
];

function TreeRow({ r }) {
  const leaf = r.kind === "leaf";
  const white = r.kind === "white";
  const line = white ? "#444" : "#12304f";
  const v = r.v || [[19, 0, 23], [30, 0, 23], [53, 0, 23]];
  const iconX = leaf ? 68 : r.icon;
  const svgW = iconX + (leaf ? 12 : 15);
  const bg = white ? "bg-white text-[#222] border-[#f0f0f0]" : "bg-[#0078d7] text-white border-[#d4e6f7]";
  return (
    <div className={`flex h-[22.400px] shrink-0 border-b ${bg}`}>
      <div className={`flex w-[371px] shrink-0 items-center border-r ${white ? "border-[#eee]" : "border-[#d4e6f7]"} ${r.kind === "focus" ? "bg-linear-to-r from-[#8ba5cf] to-[#a0b5d8] outline-2 -outline-offset-2 outline-[#26507f]" : ""}`}>
        <svg className="shrink-0" width={svgW} height="22.4" viewBox={`0 0 ${svgW} 22.4`} fill="none">
          {v.map(([x, a, b], i) => <path key={i} d={`M${x} ${a}V${b + 0.4}`} stroke={line} strokeWidth="1.300" />)}
          {leaf ? <path d="M53 11.500h10" stroke={line} /> : (
            <g>
              <path d={`M${r.box + 5} 11.500h${white ? 6 : 6.500}`} stroke={line} />
              <rect x={r.box - 5} y="6.500" width="10" height="10" fill={white ? "#fff" : r.kind === "focus" ? "#8ba5cf" : "#0078d7"} stroke={line} strokeWidth="1.200" />
              <path d={`M${r.box - 2.5} 11.500h5${r.plus ? "M" + r.box + " 9v5" : ""}`} stroke={line} strokeWidth="1.200" />
            </g>
          )}
          {leaf ? (
            <g><path d="M68.500 5.500h6l4.500 4.500v8.500H68.500z" fill="#f1f1f1" stroke="#5f6b78" /><path d="M74.500 5.500V10H79z" fill="#8a929c" stroke="#5f6b78" /></g>
          ) : (
            <g transform={`translate(${r.icon} 4)`}>
              <path d="M4.500 3.500h6l4 4v8h-10z" fill="#f5f5f5" stroke="#6b6b6b" />
              <path d="M.5.500h6.500l3.500 3.500v9.500H.5z" fill="#ececec" stroke="#6b6b6b" /><path d="M7 .5V4h3.500z" fill="#8f8f8f" stroke="#6b6b6b" />
            </g>
          )}
        </svg>
        <T w={r.w} className={leaf ? "ml-[5px]" : "ml-[4px]"}>{r.text}</T>
      </div>
      <div className="flex items-center pl-[4px]"><T w={r.ww}>{r.wbs}</T></div>
    </div>
  );
}

function TreeGrid() {
  return (
    <div className="flex h-[256px] w-[514px] shrink-0 border border-[#93aed0] bg-white text-[12px]">
      <div className="flex w-[493px] shrink-0 flex-col overflow-hidden">
        <div className="flex h-[27px] shrink-0 items-center bg-linear-to-b from-[#f3f8fe] to-[#dde9f8] font-semibold text-[#2c4468]">
          <div className="flex h-full w-[371px] items-center justify-center border-r border-[#ccdcf0] pt-[3px]"><T w={50}>Eléments</T></div>
          <div className="flex h-full flex-1 items-center justify-center pt-[3px]"><T w={26}>WBS</T></div>
        </div>
        <div className="flex min-h-0 flex-1 flex-col overflow-hidden">
          <div className="-mt-[9.500px] flex flex-col">
            {ROWS.map((r) => <TreeRow key={r.wbs} r={r} />)}
          </div>
        </div>
      </div>
      <div className="flex w-[19px] flex-col items-center bg-[#f0f0f0]">
        <Svg w={9} h={6} className="mt-[7px]"><path d="M.5 5.500l4-4.500 4 4.500" stroke="#888" strokeWidth="1.300" /></Svg>
        <div className="mt-[7px] h-[8px] w-[17px] bg-[#cdcdcd]" />
        <div className="flex-1" />
        <Svg w={9} h={6} className="mb-[5px]"><path d="M.5.5l4 4.500 4-4.500" stroke="#888" strokeWidth="1.300" /></Svg>
      </div>
    </div>
  );
}

function QuantPanel() {
  return (
    <div className="flex h-[384px] shrink-0 flex-col border-x-2 border-t border-b border-[#7b7b7b] bg-[#f0f0f0]">
      <div className="flex h-[19px] shrink-0 items-center border-b border-[#6f7f90] bg-linear-to-b from-[#c4def6] to-[#a9cdf0] pl-[5px] text-[12px] [word-spacing:2px] text-[#111]">
        <T w={128}>Classeur de Quantification</T>
        <div className="flex-1" />
        <Svg w={10} h={10}><path d="M0 9.500l3.500-3.500" stroke="#888" /><path d="M2 3.500l4.500 4.500 1-2.500L9.500 4V1H6L4.500 3z" fill="#aaa" stroke="#666" /></Svg>
        <Svg w={7} h={7} className="ml-[8px] mr-[6px]"><path d="M.5.5l6 6M6.500.5l-6 6" stroke="#111" strokeWidth="1.500" /></Svg>
      </div>
      <div className="h-[10px] shrink-0" />
      <Toolbar1 />
      <Toolbar2 />
      <div className="mt-[8px] flex h-[256px] shrink-0 pl-[11px]">
        <TreeGrid />
        <div className="ml-[8px] flex flex-1 flex-col justify-between">
          <div className="flex h-[102px] items-center justify-center border border-r-0 border-[#8e8e8e] pt-[2px] pl-[3px] text-[12px] [word-spacing:2px] text-[#111]"><T w={85}>Sélection multiple</T></div>
          <div className="h-[145px] border border-r-0 border-[#8e8e8e]" />
        </div>
      </div>
      <div className="mt-[11px] flex h-[15px] shrink-0 items-center">
        <div className="h-full w-[17px] bg-[#f4f4f4] pl-[6px]"><Svg w={5} h={9} className="mt-[3px]"><path d="M4.500.5l-4 4 4 4" stroke="#444" strokeWidth="1.500" /></Svg></div>
        <div className="h-full w-[1514px] bg-[#cdcdcd]" />
        <Svg w={7} h={9} className="ml-[19px]"><path d="M1 .5l4.500 4-4.500 4" stroke="#444" strokeWidth="1.600" /></Svg>
      </div>
    </div>
  );
}

function BottomTabs() {
  return (
    <div className="flex h-[18px] shrink-0 items-center bg-linear-to-b from-[#9f9f9f] to-[#797979] text-[12px] [word-spacing:2px] text-[#4d4d4d]">
      <div className="ml-[9px] flex h-full w-[134px] items-center bg-linear-to-b from-[#a5cbec] to-[#7b8ea3] pl-[3px] text-[#111]"><T w={127}>Classeur de Quantification</T></div>
      <T w={106} className="ml-[10px]">Catalogue d'éléments</T>
      <div className="ml-[7px] h-[13px] w-px bg-[#eee]" />
      <T w={122} className="ml-[6px]">Catalogue de ressources</T>
      <div className="ml-[6px] h-[13px] w-px bg-[#ddd]" />
    </div>
  );
}

function StatusBar() {
  return (
    <div className="flex h-[8px] shrink-0 overflow-hidden bg-[#a2a2a2] pt-[5px] pl-[1284px]">
      <Svg w={134} h={3}><path d="M0 1.500h12M22 1.500h4M90 1.500h4M104 1.500h12" stroke="#8d8d8d" /><path d="M123 .5h14v3h-14z" fill="#78838d" /></Svg>
      <Svg w={110} h={3} className="ml-[10px]"><path d="M4 0v3" stroke="#ddd" /><path d="M20 .5h10v3M20 .5v3M49 3c0-3 6-3 6 0" stroke="#222" strokeWidth="1.500" /><path d="M77 1h13" stroke="#222" strokeWidth="2" strokeDasharray="3 2" /></Svg>
      <T w={19} className="-mt-px -ml-[2px] text-[9px] leading-[9px] font-bold text-[#222]">1850</T>
    </div>
  );
}

export default function App() {
  return (
    <div className="relative h-[844px] w-[1586px] overflow-hidden bg-white pt-[12px] pl-[10px] font-['Open_Sans','Noto_Sans',sans-serif]">
      <div className="flex h-[822px] w-[1567px] flex-col bg-[#9e9e9e]">
        <div className="flex h-[39px] shrink-0 bg-[#404040]">
          <AppButton />
          <div className="flex flex-1 flex-col"><TitleRow /><TabRow /></div>
        </div>
        <Ribbon />
        <div className="relative mr-[2px] ml-[2px] h-[284px] shrink-0 bg-linear-to-b from-[#698de7] to-[#d2f0ff]">
          <Building />
          <ViewCube />
          <SelectionTree />
        </div>
        <div className="h-[3px] shrink-0 bg-[#9e9e9e]" />
        <QuantPanel />
        <BottomTabs />
        <StatusBar />
      </div>
      <div className="absolute top-[797px] left-[10px] h-[42px] w-[152px] border-[9px] border-[#ff7f84]" />
    </div>
  );
}
